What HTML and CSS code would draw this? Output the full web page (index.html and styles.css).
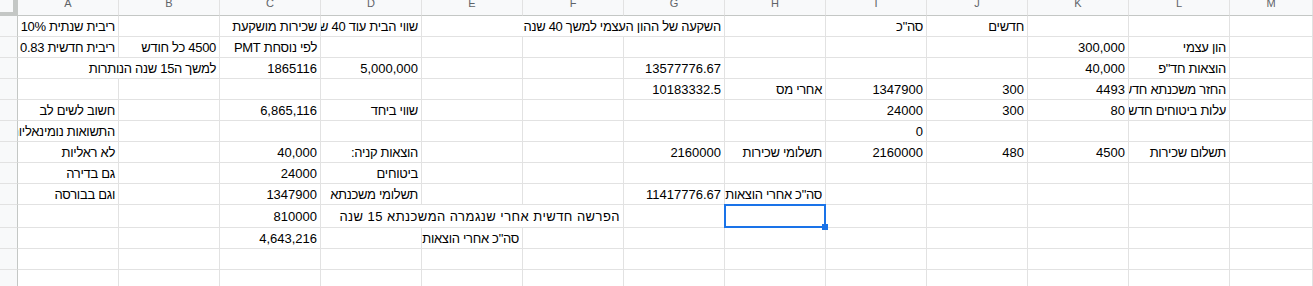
FILE: index.html
```html
<!DOCTYPE html>
<html lang="he">
<head>
<meta charset="utf-8">
<link rel="stylesheet" href="styles.css">
</head>
<body>
<div class="sheet">
  <div class="corner"></div>
  <div class="h"><span>A</span></div><div class="h"><span>B</span></div><div class="h"><span>C</span></div><div class="h"><span>D</span></div><div class="h"><span>E</span></div><div class="h"><span>F</span></div><div class="h"><span>G</span></div><div class="h"><span>H</span></div><div class="h"><span>I</span></div><div class="h"><span>J</span></div><div class="h"><span>K</span></div><div class="h"><span>L</span></div><div class="h"><span>M</span></div>

  <!-- row 1 -->
  <div class="rh"></div>
  <div class="c">ריבית שנתית 10%</div><div class="c"></div><div class="c">שכירות מושקעת</div><div class="c">שווי הבית עוד 40 שנה</div>
  <div class="c span3">השקעה של ההון העצמי למשך 40 שנה</div>
  <div class="c"></div><div class="c">סה"כ</div><div class="c">חדשים</div><div class="c"></div><div class="c"></div><div class="c"></div>

  <!-- row 2 -->
  <div class="rh"></div>
  <div class="c">ריבית חדשית 0.83</div><div class="c">4500 כל חודש</div><div class="c">לפי נוסחת PMT</div><div class="c"></div><div class="c"></div><div class="c"></div><div class="c"></div><div class="c"></div><div class="c"></div><div class="c"></div><div class="c n">300,000</div><div class="c">הון עצמי</div><div class="c"></div>

  <!-- row 3 -->
  <div class="rh"></div>
  <div class="c span2">למשך ה15 שנה הנותרות</div><div class="c n">1865116</div><div class="c n">5,000,000</div><div class="c"></div><div class="c"></div><div class="c n">13577776.67</div><div class="c"></div><div class="c"></div><div class="c"></div><div class="c n">40,000</div><div class="c">הוצאות חד"פ</div><div class="c"></div>

  <!-- row 4 -->
  <div class="rh"></div>
  <div class="c"></div><div class="c"></div><div class="c"></div><div class="c"></div><div class="c"></div><div class="c"></div><div class="c n">10183332.5</div><div class="c">אחרי מס</div><div class="c n">1347900</div><div class="c n">300</div><div class="c n">4493</div><div class="c">החזר משכנתא חדשי</div><div class="c"></div>

  <!-- row 5 -->
  <div class="rh"></div>
  <div class="c">חשוב לשים לב</div><div class="c"></div><div class="c n">6,865,116</div><div class="c">שווי ביחד</div><div class="c"></div><div class="c"></div><div class="c"></div><div class="c"></div><div class="c n">24000</div><div class="c n">300</div><div class="c n">80</div><div class="c">עלות ביטוחים חדשי</div><div class="c"></div>

  <!-- row 6 -->
  <div class="rh"></div>
  <div class="c">התשואות נומינאליות</div><div class="c"></div><div class="c"></div><div class="c"></div><div class="c"></div><div class="c"></div><div class="c"></div><div class="c"></div><div class="c n">0</div><div class="c"></div><div class="c"></div><div class="c"></div><div class="c"></div>

  <!-- row 7 -->
  <div class="rh"></div>
  <div class="c">לא ראליות</div><div class="c"></div><div class="c n">40,000</div><div class="c">הוצאות קניה:</div><div class="c"></div><div class="c"></div><div class="c n">2160000</div><div class="c">תשלומי שכירות</div><div class="c n">2160000</div><div class="c n">480</div><div class="c n">4500</div><div class="c">תשלום שכירות</div><div class="c"></div>

  <!-- row 8 -->
  <div class="rh"></div>
  <div class="c">גם בדירה</div><div class="c"></div><div class="c n">24000</div><div class="c">ביטוחים</div><div class="c"></div><div class="c"></div><div class="c"></div><div class="c"></div><div class="c"></div><div class="c"></div><div class="c"></div><div class="c"></div><div class="c"></div>

  <!-- row 9 -->
  <div class="rh"></div>
  <div class="c">וגם בבורסה</div><div class="c"></div><div class="c n">1347900</div><div class="c">תשלומי משכנתא</div><div class="c"></div><div class="c"></div><div class="c n">11417776.67</div><div class="c">סה"כ אחרי הוצאות</div><div class="c"></div><div class="c"></div><div class="c"></div><div class="c"></div><div class="c"></div>

  <!-- row 10 -->
  <div class="rh"></div>
  <div class="c"></div><div class="c"></div><div class="c n">810000</div>
  <div class="c span3 wide">הפרשה חדשית אחרי שנגמרה המשכנתא 15 שנה</div>
  <div class="c"></div><div class="c sel"></div><div class="c"></div><div class="c"></div><div class="c"></div><div class="c"></div><div class="c"></div>

  <!-- row 11 -->
  <div class="rh"></div>
  <div class="c"></div><div class="c"></div><div class="c n">4,643,216</div><div class="c"></div><div class="c">סה"כ אחרי הוצאות</div><div class="c"></div><div class="c"></div><div class="c"></div><div class="c"></div><div class="c"></div><div class="c"></div><div class="c"></div><div class="c"></div>

  <!-- row 12 -->
  <div class="rh"></div>
  <div class="c"></div><div class="c"></div><div class="c"></div><div class="c"></div><div class="c"></div><div class="c"></div><div class="c"></div><div class="c"></div><div class="c"></div><div class="c"></div><div class="c"></div><div class="c"></div><div class="c"></div>

  <!-- row 13 -->
  <div class="rh"></div>
  <div class="c"></div><div class="c"></div><div class="c"></div><div class="c"></div><div class="c"></div><div class="c"></div><div class="c"></div><div class="c"></div><div class="c"></div><div class="c"></div><div class="c"></div><div class="c"></div><div class="c"></div>
</div>
</body>
</html>
```

FILE: styles.css
```css
* { box-sizing: border-box; }

html, body {
  margin: 0;
  padding: 0;
  background: #ffffff;
  overflow: hidden;
}

body {
  font-family: "Liberation Sans", Arial, sans-serif;
}

.sheet {
  display: grid;
  grid-template-columns: 18px repeat(12, 101px) 1fr;
  grid-template-rows: 16px repeat(9, 21px) 23px repeat(3, 21px);
  width: 1313px;
}

.corner {
  background: #f8f9fa;
  border-right: 5px solid #c4c7c5;
  border-bottom: 4px solid #c4c7c5;
}

.h {
  background: #f8f9fa;
  border-right: 1px solid #e2e2e2;
  border-bottom: 1px solid #c4c7c5;
  color: #5f6368;
  font-size: 11px;
  line-height: 11px;
  display: flex;
  justify-content: center;
  align-items: flex-start;
  overflow: hidden;
}

.h span {
  margin-top: -2px;
}

.rh {
  background: #f8f9fa;
  border-right: 1px solid #c4c7c5;
  border-bottom: 1px solid #e2e2e2;
}

.c {
  direction: rtl;
  text-align: right;
  border-right: 1px solid #e2e2e2;
  border-bottom: 1px solid #e2e2e2;
  font-size: 13px;
  line-height: 17px;
  letter-spacing: -0.3px;
  color: #000000;
  white-space: nowrap;
  overflow: hidden;
  padding: 0 3px;
  display: flex;
  align-items: center;
}

.c.n {
  letter-spacing: 0;
}

.c.wide {
  letter-spacing: 0.45px;
}

.span2 { grid-column: span 2; }
.span3 { grid-column: span 3; }

.sel {
  position: relative;
  overflow: visible;
}

.sel::before {
  content: "";
  position: absolute;
  left: -1px;
  top: -1px;
  right: -1px;
  bottom: -1px;
  border: 2px solid #1a73e8;
}

.sel::after {
  content: "";
  position: absolute;
  right: -3px;
  bottom: -3px;
  width: 6px;
  height: 6px;
  background: #1a73e8;
}
```
